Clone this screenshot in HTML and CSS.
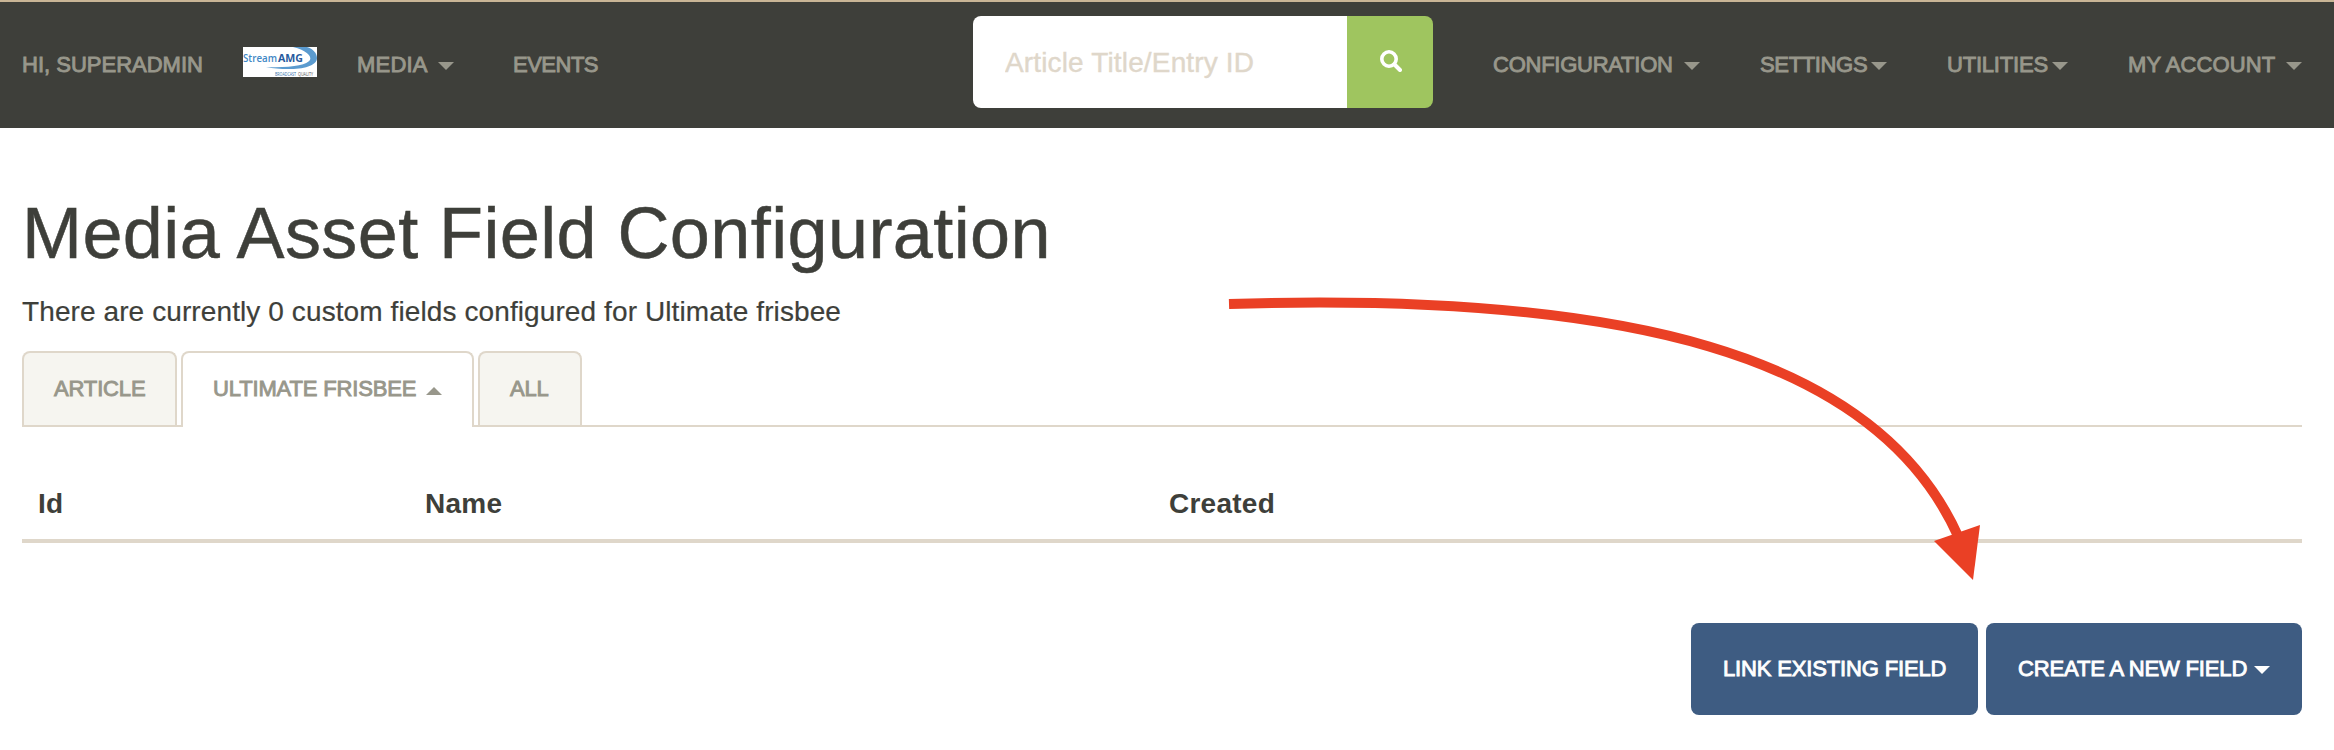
FILE: index.html
```html
<!DOCTYPE html>
<html lang="en">
<head>
<meta charset="utf-8">
<title>Media Asset Field Configuration</title>
<link rel="stylesheet" href="styles.css">
</head>
<body>
<header class="navbar">
  <nav class="nav-left">
    <a class="greeting">HI, SUPERADMIN</a>
    <svg class="logo" viewBox="0 0 74 30" width="74" height="30">
      <rect width="74" height="30" fill="#fff"/>
      <path d="M50 0C63 3 69 9 67 13C64 18 48 21 23 20C43 24 74 23 74 11C74 6 70 2 64 0Z" fill="#5b9bcf"/>
      <text x="0" y="15" class="logo-name" textLength="34" lengthAdjust="spacingAndGlyphs" fill="#3f88c5">Stream</text>
      <text x="35" y="15" class="logo-name logo-bold" textLength="25" lengthAdjust="spacingAndGlyphs" fill="#285a9e">AMG</text>
      <text x="32" y="29" class="logo-tag" textLength="21" lengthAdjust="spacingAndGlyphs" fill="#2f6ca8">BROADCAST</text>
      <text x="55" y="29" class="logo-tag" textLength="15" lengthAdjust="spacingAndGlyphs" fill="#555">QUALITY</text>
    </svg>
    <a class="media">MEDIA<i class="caret"></i></a>
    <a class="events">EVENTS</a>
  </nav>
  <form class="search">
    <input class="search-input" type="text" placeholder="Article Title/Entry ID">
    <button class="search-button" type="button" aria-label="Search">
      <svg viewBox="0 0 22 22" width="22" height="22" fill="none" stroke="#fff">
        <circle cx="9" cy="9" r="7.2" stroke-width="3.6"/>
        <path d="M14.5 14.5L20 20" stroke-width="4" stroke-linecap="round"/>
      </svg>
    </button>
  </form>
  <nav class="nav-right">
    <a class="configuration">CONFIGURATION<i class="caret"></i></a>
    <a class="settings">SETTINGS<i class="caret"></i></a>
    <a class="utilities">UTILITIES<i class="caret"></i></a>
    <a class="account">MY ACCOUNT<i class="caret"></i></a>
  </nav>
</header>
<main class="content">
  <h1 class="title">Media Asset Field Configuration</h1>
  <p class="summary">There are currently 0 custom fields configured for Ultimate frisbee</p>
  <div class="tabs">
    <a class="tab tab-article">ARTICLE</a>
    <a class="tab tab-active">ULTIMATE FRISBEE<i class="caret caret-up"></i></a>
    <a class="tab tab-all">ALL</a>
  </div>
  <div class="table-head">
    <span class="th-id">Id</span>
    <span class="th-name">Name</span>
    <span class="th-created">Created</span>
  </div>
  <div class="actions">
    <button class="button link-field">LINK EXISTING FIELD</button>
    <button class="button create-field">CREATE A NEW FIELD<i class="caret"></i></button>
  </div>
</main>
<svg class="arrow" viewBox="1220 290 770 300" width="770" height="300">
  <path d="M1229 304C1620 292 1875 352 1958 536" fill="none" stroke="#ea4025" stroke-width="10"/>
  <path d="M1934 541L1980 525L1973 580Z" fill="#ea4025"/>
</svg>
</body>
</html>
```
FILE: styles.css
```css
* { box-sizing: border-box; }

body {
  position: relative;
  margin: 0;
  height: 750px;
  overflow: hidden;
  background: #fff;
  color: #3e3f3a;
  font-family: "Liberation Sans", Arial, sans-serif;
  font-size: 28px;
}

.navbar {
  display: flex;
  height: 128px;
  padding: 0 32px 0 22px;
  border-top: 2px solid #c9b596;
  background: #3e3f3a;
  color: #98978b;
  font-size: 22px;
  -webkit-text-stroke: 0.9px;
}

.nav-left, .nav-right {
  display: flex;
  align-items: center;
  white-space: nowrap;
}

.nav-left { width: 951px; }
.nav-right { flex: 1; }
.nav-left a, .nav-right a { display: flex; align-items: center; }
.greeting { width: 221px; }
.logo { margin-top: -6px; -webkit-text-stroke: 0; }
.logo-name { font-family: "Open Sans", sans-serif; font-size: 11px; font-weight: 600; }
.logo-bold { font-weight: 700; }
.logo-tag { font-family: "Open Sans", sans-serif; font-size: 4.5px; }
.media { width: 134px; margin-left: 40px; letter-spacing: 0.2px; }
.events { margin-left: 22px; letter-spacing: -0.5px; }

.caret {
  flex: none;
  width: 16px;
  height: 8px;
  margin: 2px 0 0 auto;
  background: currentColor;
  clip-path: polygon(0 0, 100% 0, 50% 100%);
}

.caret-up { clip-path: polygon(50% 0, 100% 100%, 0 100%); }
.media .caret { margin-right: 37px; }

.search { display: flex; width: 460px; height: 92px; margin-top: 14px; }

.search-input {
  width: 374px;
  padding: 1px 32px 0;
  border: 0;
  border-radius: 8px 0 0 8px;
  background: #fff;
  font: 28px "Liberation Sans", Arial, sans-serif;
  letter-spacing: 0.15px;
}

.search-input::placeholder { color: #dfd7ca; opacity: 1; -webkit-text-stroke: 0.4px; }

.search-button {
  display: flex;
  align-items: center;
  justify-content: center;
  width: 86px;
  padding: 0 0 2px 2px;
  border: 0;
  border-radius: 0 8px 8px 0;
  background: #9fc55f;
}

.configuration { width: 207px; margin-left: 60px; letter-spacing: -0.25px; }
.settings { width: 127px; margin-left: 60px; letter-spacing: -0.35px; }
.utilities { width: 121px; margin-left: 60px; letter-spacing: -0.2px; }
.account { width: 174px; margin-left: 60px; letter-spacing: 0.1px; }

.content { padding: 59px 32px 0 22px; }
.title { margin: 0; font-size: 72px; font-weight: 400; line-height: 92px; letter-spacing: 0.4px; white-space: nowrap; -webkit-text-stroke: 0.5px; }
.summary { margin: 13px 0 19px; line-height: 40px; letter-spacing: 0.1px; white-space: nowrap; -webkit-text-stroke: 0.2px; }

.tabs {
  display: flex;
  gap: 4px;
  height: 76px;
  border-bottom: 2px solid #dfd7ca;
  color: #98978b;
  font-size: 22px;
  -webkit-text-stroke: 0.9px;
}

.tab {
  display: flex;
  align-items: center;
  height: 74px;
  padding: 0 30px;
  border: 2px solid #dfd7ca;
  border-bottom: 0;
  border-radius: 8px 8px 0 0;
  background: #f6f5f0;
  letter-spacing: -0.15px;
  white-space: nowrap;
}

.tab-article { width: 155px; }
.tab-active { width: 293px; height: 76px; padding-bottom: 2px; background: #fff; }
.tab-active .caret { margin-top: 4px; }
.tab-all { width: 104px; }

.table-head {
  display: flex;
  align-items: center;
  height: 116px;
  padding: 41px 16px 0;
  border-bottom: 4px solid #dfd7ca;
  font-weight: 700;
  letter-spacing: 0.25px;
}

.th-id { width: 387px; }
.th-name { width: 744px; }

.actions { display: flex; justify-content: flex-end; gap: 8px; padding-top: 80px; }

.button {
  display: flex;
  align-items: center;
  height: 92px;
  padding: 0 32px;
  border: 0;
  border-radius: 8px;
  background: #3e5c82;
  color: #fff;
  font: 22px "Liberation Sans", Arial, sans-serif;
  letter-spacing: -0.15px;
  white-space: nowrap;
  -webkit-text-stroke: 0.9px;
}

.link-field { width: 287px; }
.create-field { width: 316px; }

.arrow { position: absolute; left: 1220px; top: 290px; }
```
